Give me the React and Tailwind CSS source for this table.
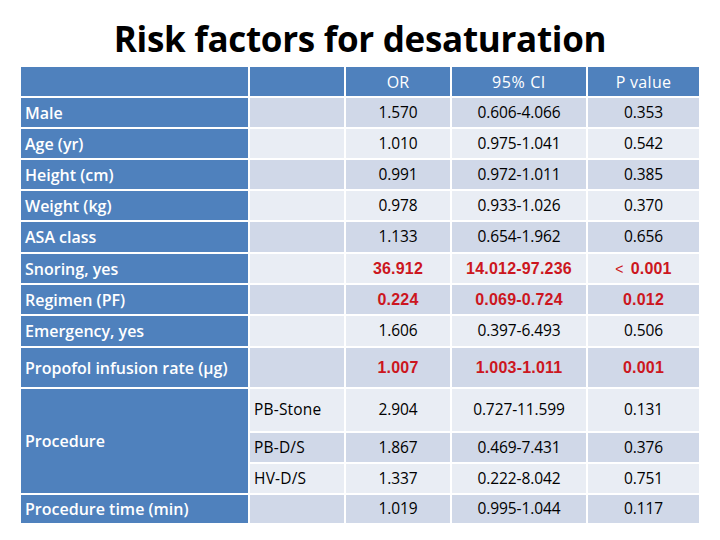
import React from "react";

const rows = [
  { label: "Male", or: "1.570", ci: "0.606-4.066", p: "0.353" },
  { label: "Age (yr)", or: "1.010", ci: "0.975-1.041", p: "0.542" },
  { label: "Height (cm)", or: "0.991", ci: "0.972-1.011", p: "0.385" },
  { label: "Weight (kg)", or: "0.978", ci: "0.933-1.026", p: "0.370" },
  { label: "ASA class", or: "1.133", ci: "0.654-1.962", p: "0.656" },
  { label: "Snoring, yes", or: "36.912", ci: "14.012-97.236", p: "<  0.001", red: true },
  { label: "Regimen (PF)", or: "0.224", ci: "0.069-0.724", p: "0.012", red: true },
  { label: "Emergency, yes", or: "1.606", ci: "0.397-6.493", p: "0.506" },
  { label: "Propofol infusion rate (μg)", or: "1.007", ci: "1.003-1.011", p: "0.001", red: true },
];

const proc = [
  { sub: "PB-Stone", or: "2.904", ci: "0.727-11.599", p: "0.131" },
  { sub: "PB-D/S", or: "1.867", ci: "0.469-7.431", p: "0.376" },
  { sub: "HV-D/S", or: "1.337", ci: "0.222-8.042", p: "0.751" },
];

const sans = { fontFamily: '"Open Sans", "Noto Sans", sans-serif' };
const arial = { fontFamily: '"Liberation Sans", Arial, sans-serif' };

function Label({ children, className = "" }) {
  return (
    <div
      className={`bg-[#4f81bd] text-white font-semibold text-[16px] flex items-center pl-[4px] ${className}`}
      style={sans}
    >
      {children}
    </div>
  );
}

function Num({ children, bg, red }) {
  return (
    <div className={`${bg} flex items-center justify-center`}>
      {red ? (
        <span className="text-[#cc1620] font-bold text-[16px] tracking-[0.2px]" style={arial}>
          {children}
        </span>
      ) : (
        <span className="text-black text-[15.5px] tracking-[-0.1px]" style={sans}>
          {children}
        </span>
      )}
    </div>
  );
}

export default function App() {
  const dark = "bg-[#d0d8e8]";
  const light = "bg-[#e9edf4]";
  return (
    <div className="w-[720px] h-[540px] bg-white relative overflow-hidden">
      <div className="h-[67px] flex justify-center pt-[21px]">
        <h1
          className="text-[35px] font-bold text-black leading-none tracking-[-0.3px] h-fit"
          style={sans}
        >
          Risk factors for desaturation
        </h1>
      </div>
      <div className="ml-[21px] grid grid-cols-[227px_94px_104px_134px_111px] grid-rows-[29px_29px_29px_29px_29px_30px_29px_29px_30px_39px_42px_29px_29px_28px] gap-[2px]">
        <div className="bg-[#4f81bd]" />
        <div className="bg-[#4f81bd]" />
        <div className="bg-[#4f81bd] text-white text-[16px] flex items-center justify-center" style={sans}>
          OR
        </div>
        <div className="bg-[#4f81bd] text-white text-[16px] flex items-center justify-center tracking-[0.6px]" style={sans}>
          95%&nbsp;CI
        </div>
        <div className="bg-[#4f81bd] text-white text-[16px] flex items-center justify-center tracking-[0.3px]" style={sans}>
          P value
        </div>
        {rows.map((r, i) => {
          const bg = i % 2 === 0 ? dark : light;
          return (
            <React.Fragment key={r.label}>
              <Label>{r.label}</Label>
              <div className={bg} />
              <Num bg={bg} red={r.red}>{r.or}</Num>
              <Num bg={bg} red={r.red}>{r.ci}</Num>
              <Num bg={bg} red={r.red}>
                {r.p.startsWith("<") ? (
                  <>
                    <span className="font-normal text-[14px] mr-[7px]">&lt;</span>0.001
                  </>
                ) : (
                  r.p
                )}
              </Num>
            </React.Fragment>
          );
        })}
        <Label className="row-span-3">Procedure</Label>
        {proc.map((r, i) => {
          const bg = i % 2 === 0 ? light : dark;
          return (
            <React.Fragment key={r.sub}>
              <div
                className={`${bg} flex items-center pl-[4px] text-[15.5px] text-black tracking-[0.2px]`}
                style={sans}
              >
                {r.sub}
              </div>
              <Num bg={bg}>{r.or}</Num>
              <Num bg={bg}>{r.ci}</Num>
              <Num bg={bg}>{r.p}</Num>
            </React.Fragment>
          );
        })}
        <Label>Procedure time (min)</Label>
        <div className={dark} />
        <Num bg={dark}>1.019</Num>
        <Num bg={dark}>0.995-1.044</Num>
        <Num bg={dark}>0.117</Num>
      </div>
    </div>
  );
}
